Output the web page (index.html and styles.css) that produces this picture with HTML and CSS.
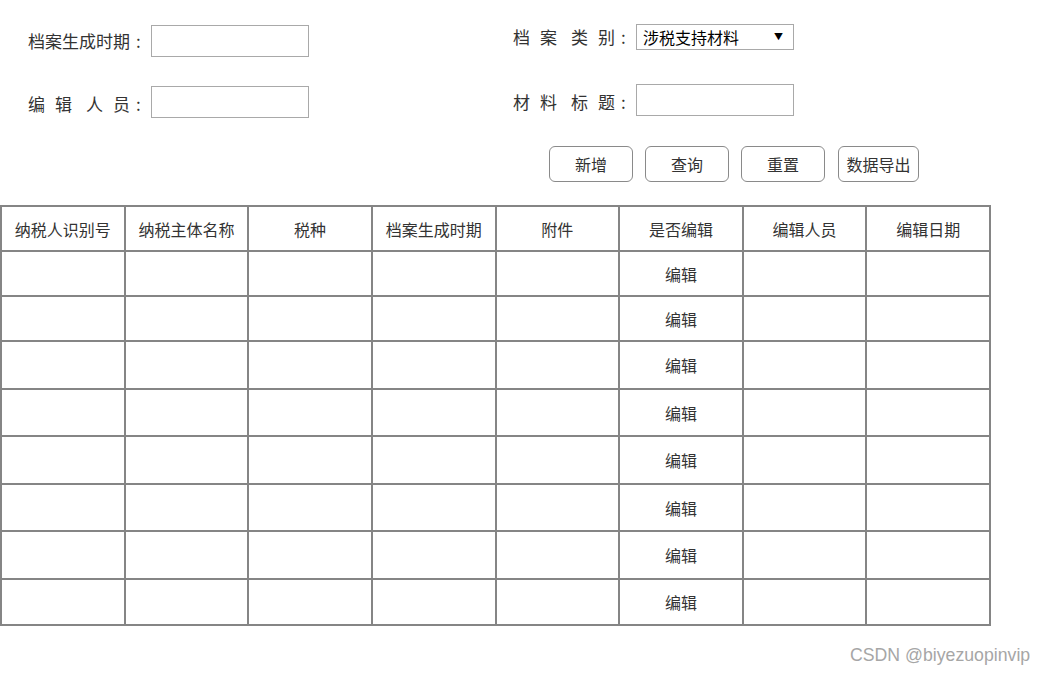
FILE: index.html
```html
<!DOCTYPE html>
<html lang="zh-CN">
<head>
<meta charset="utf-8">
<title>档案管理</title>
<link rel="stylesheet" href="styles.css">
</head>
<body>
<div class="page">
  <div class="form">
    <div class="field f1">
      <label class="lbl">档案生成时期<span class="colon">:</span></label>
      <input class="txt" type="text">
    </div>
    <div class="field f2">
      <label class="lbl">档<span class="s1"></span>案<span class="s2"></span>类<span class="s1"></span>别<span class="colon">:</span></label>
      <div class="sel-wrap">
        <select class="sel"><option>涉税支持材料</option></select>
        <span class="arrow">▼</span>
      </div>
    </div>
    <div class="field f3">
      <label class="lbl">编<span class="s1"></span>辑<span class="s2"></span>人<span class="s1"></span>员<span class="colon">:</span></label>
      <input class="txt" type="text">
    </div>
    <div class="field f4">
      <label class="lbl">材<span class="s1"></span>料<span class="s2"></span>标<span class="s1"></span>题<span class="colon">:</span></label>
      <input class="txt" type="text">
    </div>
  </div>
  <div class="actions">
    <button class="btn">新增</button>
    <button class="btn b2">查询</button>
    <button class="btn b3">重置</button>
    <button class="btn b4">数据导出</button>
  </div>
  <table class="grid">
    <thead>
      <tr><th>纳税人识别号</th><th>纳税主体名称</th><th>税种</th><th>档案生成时期</th><th>附件</th><th>是否编辑</th><th>编辑人员</th><th>编辑日期</th></tr>
    </thead>
    <tbody>
      <tr><td></td><td></td><td></td><td></td><td></td><td>编辑</td><td></td><td></td></tr>
      <tr><td></td><td></td><td></td><td></td><td></td><td>编辑</td><td></td><td></td></tr>
      <tr><td></td><td></td><td></td><td></td><td></td><td>编辑</td><td></td><td></td></tr>
      <tr><td></td><td></td><td></td><td></td><td></td><td>编辑</td><td></td><td></td></tr>
      <tr><td></td><td></td><td></td><td></td><td></td><td>编辑</td><td></td><td></td></tr>
      <tr><td></td><td></td><td></td><td></td><td></td><td>编辑</td><td></td><td></td></tr>
      <tr><td></td><td></td><td></td><td></td><td></td><td>编辑</td><td></td><td></td></tr>
      <tr><td></td><td></td><td></td><td></td><td></td><td>编辑</td><td></td><td></td></tr>
    </tbody>
  </table>
  <div class="watermark">CSDN @biyezuopinvip</div>
</div>
</body>
</html>
```
FILE: styles.css
```css
html, body {
  margin: 0;
  padding: 0;
  background: #fff;
}
body {
  font-family: "Noto Sans CJK SC", "Noto Sans", sans-serif;
  font-size: 16px;
  color: #333;
}
.page {
  position: relative;
  width: 1045px;
  height: 674px;
}
.form {
  display: grid;
  grid-template-columns: 485px 300px;
  padding: 24px 0 0 28px;
  row-gap: 27px;
  align-items: start;
}
.field {
  display: flex;
  align-items: center;
}
.f1 { margin-top: 1px; }
.f3 { margin-top: 2px; }
.f4 { margin-top: 0; }
.f3 .lbl, .f4 .lbl { padding-top: 4px; }
.lbl {
  width: 123px;
  white-space: nowrap;
  font-size: 17px;
  line-height: 20px;
  color: #333;
}
.colon {
  margin-left: 6px;
}
.s1 { display: inline-block; width: 10px; }
.s2 { display: inline-block; width: 14px; }
.txt {
  box-sizing: border-box;
  width: 158px;
  height: 32px;
  margin: 0;
  padding: 0 6px;
  border: 1px solid #a9a9a9;
  border-radius: 0;
  background: #fff;
  font: inherit;
  outline: none;
}
.sel-wrap {
  position: relative;
  width: 158px;
  height: 26px;
}
.sel {
  box-sizing: border-box;
  width: 158px;
  height: 26px;
  margin: 0;
  padding: 0 0 0 6px;
  border: 1px solid #a9a9a9;
  border-radius: 0;
  background: #fff;
  appearance: none;
  -webkit-appearance: none;
  font-family: "Noto Sans CJK SC", sans-serif;
  font-size: 16px;
  color: #000;
}
.arrow {
  position: absolute;
  right: 11px;
  top: 8px;
  font-size: 9px;
  line-height: 10px;
  color: #000;
  pointer-events: none;
}
.actions {
  display: flex;
  padding: 0 0 0 549px;
  margin-top: 28px;
}
.btn {
  box-sizing: border-box;
  width: 84px;
  height: 36px;
  margin: 0;
  padding: 0;
  border: 1px solid #8a8a8a;
  border-radius: 6px;
  background: #fff;
  font-family: "Noto Sans CJK SC", sans-serif;
  font-size: 16px;
  color: #333;
}
.b2 { margin-left: 12px; }
.b3 { margin-left: 12px; }
.b4 { margin-left: 13px; width: 81px; }
.grid {
  margin-top: 23px;
  width: 991px;
  border-collapse: collapse;
  table-layout: fixed;
}
.grid th, .grid td {
  border: 2px solid #858585;
  padding: 0;
  text-align: center;
  font-weight: normal;
  font-size: 16px;
  color: #333;
}
.grid thead tr { height: 45px; }
.grid tbody tr { height: 47px; }
.grid tbody tr:nth-child(1),
.grid tbody tr:nth-child(2) { height: 45px; }
.grid tbody tr:nth-child(3),
.grid tbody tr:nth-child(5),
.grid tbody tr:nth-child(7) { height: 48px; }
.grid tbody tr:nth-child(8) { height: 46px; }
.watermark {
  position: absolute;
  left: 850px;
  top: 645px;
  font-family: "Liberation Sans", Arial, sans-serif;
  font-size: 17.7px;
  color: #a6a6a6;
  white-space: nowrap;
}
```
